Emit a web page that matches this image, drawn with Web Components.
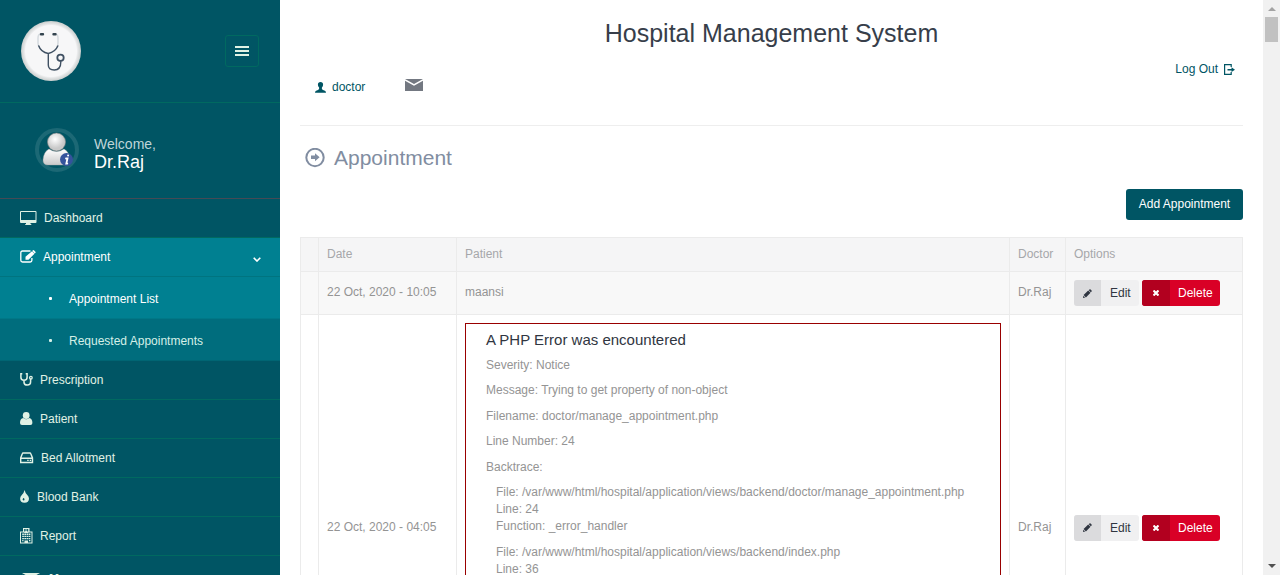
<!DOCTYPE html>
<html lang="en"><head><meta charset="utf-8"><title>Hospital Management System</title>
<style>
html,body{margin:0;height:100%;overflow:hidden;background:#fff}
body{font:12px/17px "Liberation Sans",Arial,sans-serif;color:#949494}
</style></head><body>
<hms-app></hms-app>
<script>
const define=(name,html,setup)=>customElements.define(name,class extends HTMLElement{
  constructor(){super();this.attachShadow({mode:'open'});}
  connectedCallback(){this.shadowRoot.innerHTML=typeof html==='function'?html(this):html;}
});
const icons={
 monitor:[17,14,'<path fill-rule="evenodd" d="M1 0h14.500q1 0 1 1v10q0 1-1 1H10.500v1q1 .2 1 1H5q0-.8 1-1v-1H1q-1 0-1-1V1q0-1 1-1zm0 1v8h14.500V1z"/>'],
 edit:[16,13,'<path d="M10.500 1H2.500Q.8 1 .8 2.700v7.600Q.8 12 2.500 12h7.700q1.700 0 1.700-1.700V8" fill="none" stroke="currentColor" stroke-width="1.300"/><path d="M12 1.200l2.500 2.500-6 6H5.500V6.700zM12.700.5q.7-.8 1.500 0l1.200 1.200q.6.700-.2 1.400l-.4.400L12.300.900z"/>'],
 steth:[13,13,'<path d="M2.300.8H.9v3.500Q.9 7.300 4 7.300T7.100 4.300V.8H5.700M4 7.300v1.900q0 2.900 3.300 2.900t3.300-3V5.700" fill="none" stroke="currentColor" stroke-width="1.500"/><circle cx="10.900" cy="4.700" r="1.300" fill="none" stroke="currentColor" stroke-width="1.300"/>'],
 user:[13,13,'<circle cx="6.200" cy="3.500" r="3.400"/><path d="M3.300 6q2.900 2.400 5.800 0 3.300.3 3.300 5 0 2-2 2H2q-2 0-2-2 0-4.700 3.300-5z"/>'],
 hdd:[14,12,'<path d="M3.300 1h6.500q.8 0 1 .7l1.700 4.300v4.500H.7V6l1.600-4.300q.2-.7 1-.7zM1 6.200h11.400" fill="none" stroke="currentColor" stroke-width="1.400"/><path d="M7.200 7.800h1.500v1.300H7.200zM9.700 7.800h1.500v1.300H9.700z"/>'],
 drop:[10,13,'<path fill-rule="evenodd" d="M4.600 0Q5 2.500 7.300 5.100 9 7 9 8.700 8.800 12.600 4.500 12.800.200 12.600.100 8.700.100 7 1.800 5.100 4.100 2.500 4.600 0zM3.300 8q-1.500 1.600 0 2.500 1.500 0 1.200-1.300T3.300 8z"/>'],
 building:[13,16,'<path fill-rule="evenodd" d="M3 3.500V0h6.500v3.500h3V15.500H0V3.500zM1 4.600v9.800h3.500v-2h3.500v2h3.500V4.600H9q-2.800 1-5.500 0zM4.200 1.100v2.300h1V2.600h2v.8h1V1.100h-1v.5h-2v-.5z"/><path d="M2.200 6.200h8.200M2.200 8.400h8.200M2.200 10.600h8.200M2.200 12.600h1.300M9 12.600h1.400" stroke="currentColor" stroke-width="1.400" stroke-dasharray="1.700 .5"/>'],
 mail:[18,12,'<path d="M0 0h18L9 5zM0 1.700l9 5 9-5V12H0z"/>'],
 bars:[14,10,'<path d="M0 0h14v2H0zM0 4h14v2H0zM0 8h14v2H0z"/>'],
 chevron:[8,5,'<path d="M.7.7L4 4 7.300.7" fill="none" stroke="currentColor" stroke-width="1.600"/>'],
 profile:[11,11,'<path d="M5.500 0q2.600 0 2.600 2.800 0 1.400-1.200 2.700-.5 1.800 1.100 2.500 3 .6 3 2.700H0Q0 8.600 3 8q1.600-.7 1.100-2.500Q2.900 4.200 2.900 2.800 2.900 0 5.500 0z"/>'],
 logout:[11,11,'<path d="M7.200 3V.6H.6v9.800h6.600V8" fill="none" stroke="currentColor" stroke-width="1.200"/><path d="M3.500 5h4V3.300L11 5.700 7.500 8.100V6.400h-4z"/>'],
 arrow:[20,20,'<circle cx="10" cy="9.500" r="8.700" fill="none" stroke="currentColor" stroke-width="2"/><path d="M6 7.500h4V5.300l4.600 4-4.600 4V11.100H6z"/>'],
 pencil:[9,9,'<path d="M7 0L9 2 7.800 3.200 5.800 1.200zM5.200 1.500l2.300 2.300L2.900 8.400.6 6.100zM.3 6.700L2.200 8.600 0 9z"/>'],
 close:[6,6,'<path d="M.5.5l5 5M5.500.5l-5 5" stroke="currentColor" stroke-width="2.100"/>']
};
define('hms-icon',el=>{const [w,h,p]=icons[el.getAttribute('name')];
 return `<style>:host{display:block;flex:none;width:${w}px;height:${h}px}svg{display:block}</style><svg width="${w}" height="${h}" viewBox="0 0 ${w} ${h}" fill="currentColor">${p}</svg>`;});

define('nav-item',el=>`<style>
:host{display:block;color:#e0f2e5}
div{box-sizing:border-box;height:39px;border-bottom:1px solid #006960;display:flex;align-items:center;padding:0 19px 0 20px}
span{margin-left:7px}
hms-icon{margin-top:-1px}
.chev{margin:4px 0 0 auto}
:host([active]) div{background:#008091;color:#fff;border-color:#007480}
</style><div><hms-icon name="${el.getAttribute('icon')}"></hms-icon><span><slot></slot></span>${el.hasAttribute('active')?'<hms-icon class="chev" name="chevron"></hms-icon>':''}</div>`);
define('nav-sub',`<style>
:host{display:flex;box-sizing:border-box;height:42px;align-items:center;background:#006d7d;border-bottom:1px solid #006573;color:#d5f0e8;padding:3px 0 0 49px}
:host([active]){background:#008091;color:#fff;border-color:#007887}
i{width:3px;height:3px;border-radius:1px;background:currentColor;margin:-1px 17px 0 0}
</style><i></i><slot></slot>`);

define('logo-mark',`<style>:host{display:block;width:60px;height:60px}</style>
<svg width="60" height="60" viewBox="0 0 60 60"><defs><radialGradient id="g"><stop offset=".85" stop-color="#f7f7f8"/><stop offset=".9" stop-color="#e5e6e7"/><stop offset="1" stop-color="#c9cecd"/></radialGradient></defs>
<circle cx="30" cy="30" r="30" fill="url(#g)"/><g fill="none" stroke-linecap="round"><path d="M20 13q-3 0-3 4v5q0 2 1 4M34 13q3 0 3 4v5q0 2-1 4" stroke="#d5dade" stroke-width="1.500"/><path d="M17.800 25q2 6 9.500 7.500Q34.300 31 36.800 25M27.300 32.500V44q0 5 6 5 6.500 0 6.500-8" stroke="#405163" stroke-width="1.400"/><path d="M20 13.200h2M32.500 13.200h2" stroke="#34444f" stroke-width="2.400"/><circle cx="39.500" cy="36.800" r="3.200" stroke="#405163" stroke-width="1.800"/></g></svg>`);
define('user-avatar',`<style>:host{display:block;width:44px;height:44px}</style>
<svg width="44" height="44" viewBox="0 0 44 44"><defs><linearGradient id="b" x2="0" y2="1"><stop stop-color="#fff"/><stop offset="1" stop-color="#c9c9c9"/></linearGradient><radialGradient id="h" cx=".42" cy=".35"><stop stop-color="#fff"/><stop offset="1" stop-color="#c9c9c9"/></radialGradient></defs>
<circle cx="22" cy="22" r="20" fill="none" stroke="#1c6875" stroke-width="4"/><path d="M14 21q7.500 5 15 0 5.500 3 6 11 0 5-5 5H13q-5 0-5-5 .5-8 6-11z" fill="url(#b)" stroke="#aaa" stroke-width=".4"/><circle cx="21.500" cy="14" r="9" fill="url(#h)" stroke="#888" stroke-width=".6"/><circle cx="31.500" cy="31.500" r="6.500" fill="#35539c"/><path d="M33 27.500h.2M31 30.500h1.500l-1.200 5h1" stroke="#fff" stroke-width="1.800" fill="none" stroke-linecap="round"/></svg>`);

define('side-bar',`<style>
:host{display:block;width:280px;flex:none;background:#005564;overflow:hidden}
.logo{box-sizing:border-box;height:103px;border-bottom:1px solid #006960;display:flex;align-items:center;justify-content:space-between;padding:0 21px}
button{box-sizing:border-box;width:34px;height:32px;border:1px solid #006960;border-radius:3px;background:none;color:#e0f2e5;display:grid;place-items:center;padding:0}
.user{box-sizing:border-box;height:96px;border-bottom:1px solid #454a55;display:flex;align-items:flex-start;padding:25px 0 0 35px}
.user p{margin:8px 0 0 15px;color:#bfd4d8;font-size:14px;line-height:17px}
.user b{display:block;font-weight:400;font-size:18px;line-height:18px;color:#fff}
.msg{color:#e0f2e5;display:flex;align-items:flex-start;padding:17px 0 0 23px;font-weight:700}
.msg hms-icon{margin-left:-1px}
.msg span{margin:-2px 0 0 9px}
</style><div class="logo"><logo-mark></logo-mark><button aria-label="Menu"><hms-icon name="bars"></hms-icon></button></div>
<div class="user"><user-avatar></user-avatar><p>Welcome,<b>Dr.Raj</b></p></div>
<nav><nav-item icon="monitor">Dashboard</nav-item><nav-item icon="edit" active>Appointment</nav-item><nav-sub active>Appointment List</nav-sub><nav-sub>Requested Appointments</nav-sub>
<nav-item icon="steth">Prescription</nav-item><nav-item icon="user">Patient</nav-item><nav-item icon="hdd">Bed Allotment</nav-item><nav-item icon="drop">Blood Bank</nav-item><nav-item icon="building">Report</nav-item>
<div class="msg"><hms-icon name="mail"></hms-icon><span>M</span></div></nav>`);

define('page-header',`<style>
:host{display:block;box-sizing:border-box;height:126px;border-bottom:1px solid #eee;color:#005564}
h1{margin:0;font-size:25px;line-height:28px;font-weight:400;color:#373e4a;text-align:center;padding-top:19px}
.bar{display:flex;justify-content:space-between;align-items:flex-start;padding:14px 8px 0 15px}
.left,.out,.name{display:flex;align-items:center}
.left{padding-top:17px}.name{gap:6px;margin-right:40px}.name span{margin-top:1px}.left>hms-icon{color:#737881;margin-bottom:4px}
.out{gap:6px}
</style><h1>Hospital Management System</h1><div class="bar"><div class="left"><div class="name"><hms-icon name="profile"></hms-icon><span>doctor</span></div><hms-icon name="mail"></hms-icon></div><div class="out"><span>Log Out</span><hms-icon name="logout"></hms-icon></div></div>`);

define('action-button',el=>`<style>
:host{display:flex;box-sizing:border-box;width:65px;height:26px;border-radius:3px;overflow:hidden;background:#f0f0f1;color:#303641;line-height:26px}
i{width:27px;display:grid;place-items:center;background:#dbdbdd}
span{padding-left:9px}
:host([danger]){width:78px;background:#d90026;color:#fff}
:host([danger]) i{width:28px;background:#b2001f}:host([danger]) span{padding-left:8px}
</style><i><hms-icon name="${el.hasAttribute('danger')?'close':'pencil'}"></hms-icon></i><span><slot></slot></span>`);
define('row-actions',`<style>:host{display:flex;gap:3px}</style><action-button>Edit</action-button><action-button danger>Delete</action-button>`);

define('php-error',`<style>
:host{display:block;box-sizing:border-box;height:410px;border:1px solid #990000;padding:5px 0 0 20px}
h4{margin:0 0 7px;font-size:15px;line-height:21px;font-weight:400;color:#303641}
p{margin:0 0 8.500px}.trace{margin-left:10px}
</style><h4>A PHP Error was encountered</h4><p>Severity: Notice</p><p>Message: Trying to get property of non-object</p><p>Filename: doctor/manage_appointment.php</p><p>Line Number: 24</p><p>Backtrace:</p>
<p class="trace">File: /var/www/html/hospital/application/views/backend/doctor/manage_appointment.php<br>Line: 24<br>Function: _error_handler</p><p class="trace">File: /var/www/html/hospital/application/views/backend/index.php<br>Line: 36</p>`);

define('appointment-table',`<style>
:host{display:block}
table{border-collapse:collapse;table-layout:fixed;width:943px}
th,td{border:1px solid #ebebeb;padding:0 8px;text-align:left;vertical-align:middle;box-sizing:border-box}
th{height:34px;background:#f5f5f6;color:#a6a7aa;font-weight:400;padding-bottom:1px}
.one td{height:43px;background:#f8f8f8}
.one td:not(:last-child){padding-bottom:2px}
.two td{height:426px}
</style><table><colgroup><col style="width:18px"><col style="width:138px"><col style="width:553px"><col style="width:56px"><col style="width:177px"></colgroup>
<tr><th></th><th>Date</th><th>Patient</th><th>Doctor</th><th>Options</th></tr>
<tr class="one"><td></td><td>22 Oct, 2020 - 10:05</td><td>maansi</td><td>Dr.Raj</td><td><row-actions></row-actions></td></tr>
<tr class="two"><td></td><td>22 Oct, 2020 - 04:05</td><td><php-error></php-error></td><td>Dr.Raj</td><td><row-actions></row-actions></td></tr></table>`);

define('scroll-bar',`<style>
:host{display:flex;flex-direction:column;align-items:center;justify-content:space-between;width:17px;flex:none;background:#f1f1f1}
i{width:0;border:4px solid transparent;border-top:0;border-bottom-color:#a3a3a3;margin-top:7px}
b{width:13px;height:25px;background:#c1c1c1;margin:6px 0 auto}
i:last-child{border-top:4px solid #505050;border-bottom:0;margin:0 0 7px}
</style><i></i><b></b><i></i>`);

define('hms-app',`<style>
:host{display:flex;height:575px;overflow:hidden}
main{flex:1;min-width:0;padding:0 20px;overflow:hidden}
h2{display:flex;align-items:center;gap:9px;margin:0;padding:19px 0 0 5px;height:25px;font-size:21px;font-weight:400;line-height:25px;color:#818da1}
.add{display:flex;justify-content:flex-end;margin:19px 0 17px}
button{height:31px;width:117px;border:0;border-radius:3px;background:#005564;color:#fff;font:inherit;padding:0 0 1px}
</style><side-bar></side-bar><main><page-header></page-header><h2><hms-icon name="arrow"></hms-icon>Appointment</h2><div class="add"><button>Add Appointment</button></div><appointment-table></appointment-table></main><scroll-bar></scroll-bar>`);
</script></body></html>
